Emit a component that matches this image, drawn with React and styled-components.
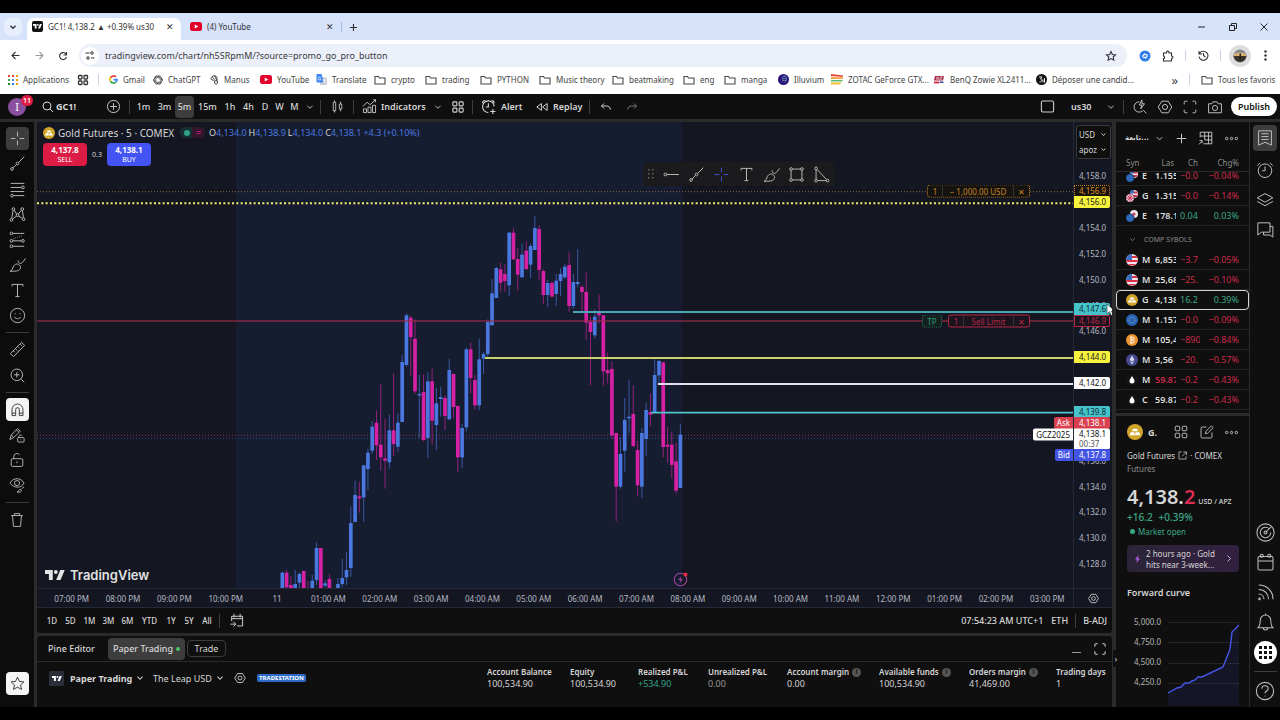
import { useState } from 'react';
import styled, { createGlobalStyle, css } from 'styled-components';

const ICONS = {
  cross: <path d='M14 4v7M14 17v7M4 14h7M17 14h7' />,
  trend: (
    <>
      <circle cx='6' cy='22' r='2' />
      <circle cx='14' cy='14' r='2' />
      <path d='M7.5 20.5l5-5M15.5 12.5L24 4' />
    </>
  ),
  fib: (
    <>
      <path d='M4 5h20M4 11h16M4 17h20M8 23h16' />
      <circle cx='22' cy='11' r='2' />
      <circle cx='6' cy='23' r='2' />
    </>
  ),
  pattern: (
    <>
      <circle cx='5' cy='22' r='2' />
      <circle cx='8' cy='6' r='2' />
      <circle cx='14' cy='15' r='2' />
      <circle cx='21' cy='6' r='2' />
      <circle cx='23' cy='21' r='2' />
      <path d='M5.4 20L7.6 8M9.2 7.6l3.6 5.8M15.2 13.4l4.6-5.8M21.3 8l1.5 11M6.6 20.8l5.8-4.6M15.6 16.2l5.8 3.6' />
    </>
  ),
  forecast: (
    <>
      <circle cx='5' cy='5' r='2' />
      <circle cx='5' cy='16' r='2' />
      <circle cx='22' cy='16' r='2' />
      <circle cx='5' cy='24' r='2' />
      <path d='M7 5h17M7 16h13M7 24h17' />
      <path d='M8 13l14-5' strokeDasharray='1 2' />
    </>
  ),
  brush: (
    <>
      <path d='M3 24c4-1 3-4 5-7 2-4 6-5 9-2s1 7-2 8-7 1-12 1z' />
      <path d='M15 8c0 5 4 6 7 2l4-5' />
    </>
  ),
  text: <path d='M6 8V5h16v3M14 5v18M11 23h6' />,
  smile: (
    <>
      <circle cx='14' cy='14' r='10.5' />
      <path d='M9.500 16c1 3.500 8 3.500 9 0M10.500 10.500v1.500M17.500 10.500v1.500' />
    </>
  ),
  ruler: (
    <>
      <path d='M3.500 20L20 3.500l4.500 4.500L8 24.500z' />
      <path d='M8 16l2 2M11 13l3 3M14.500 9.500l2 2M18 6l3 3' />
    </>
  ),
  zoom: (
    <>
      <circle cx='13' cy='13' r='8.500' />
      <path d='M19.500 19.500L24 24M13 9v8M9 13h8' />
    </>
  ),
  magnet: (
    <>
      <path d='M5 24V14a9 9 0 0 1 18 0v10h-6V14a3 3 0 0 0-6 0v10z' />
      <path d='M5 20h6M17 20h6' />
    </>
  ),
  drawLock: (
    <>
      <path d='M3 21l2-7L15 4l4 4L9 18zM5 14l4 4M13 6l4 4' />
      <rect x='15' y='18' width='10' height='7' rx='1' />
      <path d='M17 18v-2a3 3 0 0 1 5-1M20 21v1' />
    </>
  ),
  lock: (
    <>
      <rect x='5' y='12' width='18' height='12' rx='2' />
      <path d='M9 12V8a5 5 0 0 1 9-2M14 16v3' />
    </>
  ),
  eye: (
    <>
      <path d='M3 11c5-9 17-9 22 0-4 8-15 9-22 0z' />
      <circle cx='14' cy='11' r='4' />
      <path d='M14 25c3 0 2-4 5-4s2 4-1 4zM21 20l4-3' />
    </>
  ),
  trash: <path d='M5 7h18M10 7V4h8v3M7 7l1.500 17h11L21 7' />,
  star: <path d='M14 3.500l3.200 7 7.300.8-5.500 5 1.600 7.500-6.600-3.900-6.600 3.900L9 16.300l-5.500-5 7.300-.8z' />,
  ray: (
    <>
      <circle cx='5' cy='14' r='2' />
      <path d='M7 14h18' />
    </>
  ),
  rect: (
    <>
      <path d='M8 6h12M8 22h12M6 8v12M22 8v12' />
      <circle cx='6' cy='6' r='2' />
      <circle cx='22' cy='6' r='2' />
      <circle cx='6' cy='22' r='2' />
      <circle cx='22' cy='22' r='2' />
    </>
  ),
  triangle: (
    <>
      <circle cx='6' cy='5' r='2' />
      <circle cx='6' cy='23' r='2' />
      <circle cx='23' cy='23' r='2' />
      <path d='M6 7v14M8 23h13M7.500 6.500l14 15' />
    </>
  ),
  search: (
    <>
      <circle cx='12' cy='12' r='8' />
      <path d='M18 18l6 6' />
    </>
  ),
  plusCircle: (
    <>
      <circle cx='14' cy='14' r='9' />
      <path d='M14 9v10M9 14h10' />
    </>
  ),
  chevron: <path d='M8 11l6 6 6-6' />,
  candles: <path d='M7 7h4v14H7zM9 4v3M9 21v3M17 10h4v8h-4zM19 6v4M19 18v4' />,
  indicators: <path d='M4 24v-6h5v6zM11.500 24v-9h5v9zM19 24V12h5v12zM3 14l7-7 5 4 9-8M20 3h4v4' />,
  grid: (
    <>
      <rect x='5' y='5' width='7' height='7' rx='1.500' />
      <rect x='16' y='5' width='7' height='7' rx='1.500' />
      <rect x='5' y='16' width='7' height='7' rx='1.500' />
      <rect x='16' y='16' width='7' height='7' rx='1.500' />
    </>
  ),
  alert: <path d='M22 13a9 9 0 1 0-9 9.500M13 8v6H9M4 8c0-3 1-4 4-4M18 4c3 0 4 1 4 4M20 17v8M16 21h8' />,
  clock: (
    <>
      <circle cx='14' cy='15' r='9.500' />
      <path d='M14 9v6h-4M3 8l4-4M25 8l-4-4' />
    </>
  ),
  replay: <path d='M13 8v12l-8-6zM23 8v12l-8-6z' />,
  undo: <path d='M10 7l-5 5 5 5M5 12h10c4 0 7 2 8 7' />,
  redo: <path d='M18 7l5 5-5 5M23 12H13c-4 0-7 2-8 7' />,
  square: <rect x='5' y='6' width='18' height='16' rx='2' />,
  quick: <path d='M18 20a8 8 0 1 1-5-14M19 19l5 5M17 3l-4 8h4l-2 6 6-8h-4z' />,
  gear: (
    <>
      <path d='M9 5h10l5.500 9L19 23H9l-5.500-9z' />
      <circle cx='14' cy='14' r='4' />
    </>
  ),
  full: <path d='M10 5H7a2 2 0 0 0-2 2v3M18 5h3a2 2 0 0 1 2 2v3M5 18v3a2 2 0 0 0 2 2h3M23 18v3a2 2 0 0 1-2 2h-3' />,
  camera: (
    <>
      <path d='M4 9h5l2-3h6l2 3h5v14H4z' />
      <circle cx='14' cy='15.500' r='4' />
    </>
  ),
  plus: <path d='M14 5v18M5 14h18' />,
  addTable: <path d='M12 5h11v18H10M5 5v8M5 5h7M12 5v12M5 11h18M12 17h11M18 5v18M3 24l5-5M4 18h4v4' />,
  dots: (
    <>
      <circle cx='6' cy='14' r='2' />
      <circle cx='14' cy='14' r='2' />
      <circle cx='22' cy='14' r='2' />
    </>
  ),
  list: <path d='M5 4h18v20l-9-4-9 4zM9 8h10M9 12h10M9 16h10' />,
  layers: <path d='M3 11l11-6 11 6-11 6zM3 16l11 6 11-6' />,
  chat: <path d='M4 4h17v13H9l-5 4zM21 9h4v15l-4-3h-9v-4' />,
  target: (
    <>
      <circle cx='14' cy='14' r='11.500' />
      <path d='M19 9a7 7 0 1 0 2 5M14 14l8-8' />
      <circle cx='14' cy='14' r='2' />
    </>
  ),
  calendar: (
    <>
      <rect x='4' y='6' width='20' height='18' rx='2' />
      <path d='M4 12h20' />
      <circle cx='9' cy='5' r='2' />
      <circle cx='19' cy='5' r='2' />
    </>
  ),
  feed: <path d='M5 22.500a1 1 0 1 1 2 0 1 1 0 1 1-2 0M5 16c4 0 7 3 7 7M5 10c8 0 13 6 13 13M5 4c11 0 19 8 19 19' />,
  bell: <path d='M4 21c3-3 3-6 3-10a7 7 0 0 1 14 0c0 4 0 7 3 10zM11 21c0 4 6 4 6 0M14 4V2' />,
  help: (
    <>
      <circle cx='14' cy='14' r='11' />
      <path d='M10 11c0-5 8-5 8 0 0 3-4 3-4 6M14 20v1' />
    </>
  ),
  edit: <path d='M14 5H7a2 2 0 0 0-2 2v14a2 2 0 0 0 2 2h14a2 2 0 0 0 2-2v-7M12 16l1-4 9-9 3 3-9 9z' />,
  external: <path d='M12 5H5v18h18v-7M16 5h8v8M24 5L13 16' />,
  goto: <path d='M6 15V7h18v16H15M6 11h18M10 3v6M20 3v6M4 20h8M9 16l4 4-4 4' />,
};

function Icon({ name, size = 19, stroke = 1.4 }) {
  return (
    <svg width={size} height={size} viewBox='0 0 28 28' fill='none' stroke='currentColor' strokeWidth={stroke} aria-hidden='true'>
      {ICONS[name]}
    </svg>
  );
}

function TvMark({ width = 20 }) {
  return (
    <svg width={width} height={width / 2} viewBox='0 0 36 18' fill='currentColor' aria-hidden='true'>
      <path d='M0 0h14v18H7V7H0zM28 18h-8L27.500 0h8z' />
      <circle cx='19.500' cy='3.500' r='3.500' />
    </svg>
  );
}

function GoldIcon({ size = 12 }) {
  return (
    <svg width={size} height={size} viewBox='0 0 24 24' aria-hidden='true'>
      <circle cx='12' cy='12' r='12' fill='#d1a52c' />
      <path d='M9 7h6l1.500 4h-9zM5.500 12.500h5.500l1 4.500H4zM13 12.500h5.500l1.500 4.500h-8z' fill='#fff' />
    </svg>
  );
}

function Folder() {
  return (
    <svg width='12' height='10' viewBox='0 0 24 20' fill='none' stroke='#474747' strokeWidth='2.200' aria-hidden='true'>
      <path d='M2 3h7l2 3h11v12H2z' />
    </svg>
  );
}

function YoutubeIcon() {
  return (
    <svg width='12' height='9' viewBox='0 0 24 18' aria-hidden='true'>
      <rect width='24' height='18' rx='5' fill='#e3002b' />
      <path d='M9.500 5v8l7-4z' fill='#fff' />
    </svg>
  );
}

const favicons = {
  folder: <Folder />,
  youtube: <YoutubeIcon />,
  apps: (
    <svg width='10' height='10' viewBox='0 0 10 10'>
      {['#e94235', '#e94235', '#f29900', '#34a853', '#4285f4', '#f29900', '#188038', '#1a73e8', '#f29900'].map((c, i) => (
        <rect key={i} x={(i % 3) * 4} y={Math.floor(i / 3) * 4} width='2' height='2' fill={c} />
      ))}
    </svg>
  ),
  google: (
    <svg width='9' height='9' viewBox='0 0 18 18' fill='none' strokeWidth='3.500'>
      <path d='M3 5.500a7 7 0 0 1 11-1.500' stroke='#ea4335' />
      <path d='M3 12.500a7 7 0 0 1 0-7' stroke='#fbbc05' />
      <path d='M14 14a7 7 0 0 1-11-1.500' stroke='#34a853' />
      <path d='M9 9h7a7 7 0 0 1-2 5' stroke='#4285f4' />
    </svg>
  ),
  gpt: (
    <svg width='10' height='10' viewBox='0 0 20 20' fill='none' stroke='#333' strokeWidth='1.600'>
      {[0, 60, 120, 180, 240, 300].map((a) => (
        <path key={a} d='M10 2.500c3-2 6.500 0 6.500 3.500v5l-4 2.500' transform={`rotate(${a} 10 10)`} />
      ))}
    </svg>
  ),
  manus: (
    <svg width='9' height='10' viewBox='0 0 18 20' fill='none' stroke='#333' strokeWidth='1.800'>
      <path d='M3 10C0 6 4 2 6 5l3 4M5 4c1-4 5-3 6 0l2 6M8 3c3-3 6 0 6 4v6M4 10c3-1 5 1 6 4M9 14c-1 4 5 6 6 2s-2-6-5-4' />
    </svg>
  ),
  translate: (
    <svg width='11' height='11' viewBox='0 0 22 22'>
      <rect x='8' y='7' width='14' height='15' rx='2' fill='#c8ccd4' />
      <path d='M1 0h10l5 17H3a2 2 0 0 1-2-2z' fill='#4285f4' />
      <path d='M10 7.500a3 3 0 1 0 0 3H7.500M13 12h7M17 11c0 4-2 6-4 7M15 13c1 3 3 4 5 5' stroke='#fff' strokeWidth='1.300' fill='none' />
    </svg>
  ),
  illuvium: (
    <svg width='11' height='11' viewBox='0 0 22 22'>
      <circle cx='11' cy='11' r='11' fill='#2b127d' />
      <ellipse cx='13' cy='10' rx='5' ry='7' fill='#5a6ea8' />
      <path d='M10 7h6M10 11h6M10 15h5' stroke='#1d0b5c' strokeWidth='1.500' />
    </svg>
  ),
  zotac: (
    <svg width='12' height='11' viewBox='0 0 24 22'>
      <path d='M0 0l24 3v3L0 4z' fill='#e94235' />
      <path d='M0 6l24 1v3L0 10z' fill='#f2a33a' />
      <path d='M0 12h24l-2 3H0z' fill='#5fb97a' />
      <path d='M0 17h21l-3 4H0z' fill='#f2c230' />
    </svg>
  ),
  benq: (
    <svg width='11' height='9' viewBox='0 0 22 18'>
      <path d='M2 2h18l-2 9H0z' fill='#a52a43' />
      <path d='M5 5h4M12 4h5M4 8h12' stroke='#fff' strokeWidth='1.500' />
      <path d='M0 13h10v4H0z' fill='#e0304f' />
      <path d='M11 13h8v3h-8z' fill='#3b4da0' />
    </svg>
  ),
  depo: (
    <svg width='11' height='11' viewBox='0 0 22 22'>
      <circle cx='11' cy='11' r='11' fill='#111' />
      <path d='M6 6h6l-3 4c4 0 4 6-2 6M14 11v6M17 8v9' stroke='#fff' strokeWidth='1.800' fill='none' />
    </svg>
  ),
};

const bookmarks = [
  ['google', 'Gmail', 44],
  ['gpt', 'ChatGPT', 57],
  ['manus', 'Manus', 50],
  ['youtube', 'YouTube', 56],
  ['translate', 'Translate', 58],
  ['folder', 'crypto', 51],
  ['folder', 'trading', 55],
  ['folder', 'PYTHON', 59],
  ['folder', 'Music theory', 73],
  ['folder', 'beatmaking', 71],
  ['folder', 'eng', 41],
  ['folder', 'manga', 54],
  ['illuvium', 'Illuvium', 53],
  ['zotac', 'ZOTAC GeForce GTX...', 103],
  ['benq', 'BenQ Zowie XL2411...', 102],
  ['depo', 'Déposer une candid...', 100],
];

// price scale: value at the top edge of the plot and the span it covers
const TOP_PRICE = 4162.2;
const PRICE_SPAN = 36.04;
const priceTop = (price) => `${((TOP_PRICE - price) / PRICE_SPAN) * 100}%`;

const ticks = [4158, 4154, 4152, 4150, 4148, 4146, 4136, 4134, 4132, 4130, 4128];

const priceTags = [
  { text: '4,156.9', at: 4156.9, tone: 'orange' },
  { text: '4,156.0', at: 4156, tone: 'yellow' },
  { text: '4,146.9', at: 4146.8, tone: 'red' },
  { text: '4,147.6', at: 4147.7, tone: 'teal' },
  { text: '4,144.0', at: 4144, tone: 'yellow' },
  { text: '4,142.0', at: 4142, tone: 'white' },
  { text: '4,139.8', at: 4139.8, tone: 'teal' },
  { text: '4,138.1', at: 4138.9, tone: 'ask', label: 'Ask' },
  { text: '4,138.1', at: 4137.7, tone: 'white', label: 'GCZ2025', timer: '00:37' },
  { text: '4,137.8', at: 4136.45, tone: 'bid', label: 'Bid' },
];

// [up, high, body top, body bottom, low]
const candles = [
  [1, 1115, 1118, 1166, 1166], [0, 1110, 1118, 1162, 1166], [0, 1128, 1155, 1165, 1166], [1, 1110, 1152, 1166, 1166],
  [1, 1118, 1122, 1148, 1165], [0, 1112, 1113, 1166, 1166], [0, 1143, 1164, 1166, 1166], [1, 1125, 1142, 1166, 1166],
  [1, 1027, 1044, 1140, 1155], [0, 1044, 1044, 1166, 1166], [1, 1140, 1150, 1157, 1162], [0, 1122, 1137, 1166, 1166],
  [0, 1166, 1166, 1166, 1166], [1, 1134, 1152, 1166, 1166], [1, 1076, 1134, 1152, 1160], [1, 1056, 1110, 1132, 1155],
  [1, 920, 969, 1104, 1130], [1, 842, 885, 966, 966], [0, 845, 889, 895, 938], [1, 795, 796, 892, 965],
  [1, 746, 758, 807, 870], [1, 663, 680, 752, 762], [0, 632, 668, 736, 780], [0, 552, 734, 772, 812],
  [0, 657, 775, 782, 866], [1, 645, 691, 787, 806], [0, 520, 691, 732, 768], [1, 640, 668, 740, 755],
  [1, 465, 486, 666, 666], [1, 340, 346, 495, 500], [0, 348, 353, 411, 528], [0, 358, 416, 574, 582],
  [1, 525, 582, 586, 714], [0, 523, 576, 720, 724], [1, 517, 544, 714, 774], [0, 506, 544, 662, 735],
  [1, 563, 610, 675, 750], [1, 560, 591, 597, 650], [0, 585, 594, 648, 690], [1, 477, 510, 658, 660],
  [0, 520, 522, 621, 655], [0, 616, 618, 772, 816], [1, 672, 684, 772, 804], [1, 443, 448, 682, 694],
  [0, 428, 448, 534, 580], [0, 525, 540, 616, 628], [1, 416, 478, 616, 630], [1, 455, 462, 476, 522],
  [1, 358, 366, 462, 475], [1, 237, 280, 376, 376], [1, 200, 204, 294, 294], [0, 188, 208, 248, 275],
  [0, 193, 222, 243, 275], [1, 96, 98, 256, 288], [0, 85, 98, 178, 180], [0, 145, 177, 224, 272],
  [1, 130, 164, 232, 232], [0, 125, 152, 207, 210], [1, 130, 138, 194, 234], [1, 48, 84, 150, 150],
  [0, 76, 87, 210, 240], [0, 208, 213, 285, 312], [1, 240, 249, 285, 322], [0, 243, 249, 290, 292],
  [1, 222, 242, 282, 318], [1, 205, 222, 243, 288], [1, 192, 200, 232, 238], [0, 155, 195, 318, 335],
  [1, 222, 246, 318, 326], [1, 148, 246, 252, 262], [0, 255, 261, 276, 335], [0, 218, 276, 368, 420],
  [0, 350, 366, 396, 556], [1, 328, 350, 406, 416], [0, 283, 338, 346, 370], [0, 345, 346, 514, 558],
  [0, 458, 510, 520, 550], [0, 484, 507, 706, 716], [0, 698, 699, 860, 964], [1, 712, 762, 860, 866],
  [1, 594, 660, 752, 815], [1, 540, 650, 655, 700], [0, 556, 642, 738, 742], [0, 722, 750, 856, 890],
  [1, 684, 699, 860, 894], [1, 608, 630, 717, 768], [0, 580, 636, 644, 680], [1, 478, 525, 636, 638],
  [1, 480, 483, 526, 550], [0, 485, 487, 741, 772], [0, 680, 734, 740, 788], [0, 695, 734, 795, 836],
  [0, 728, 784, 872, 882], [1, 672, 704, 864, 864],
];

const hours = [
  '07:00 PM', '08:00 PM', '09:00 PM', '10:00 PM', '11', '01:00 AM', '02:00 AM', '03:00 AM', '04:00 AM', '05:00 AM',
  '06:00 AM', '07:00 AM', '08:00 AM', '09:00 AM', '10:00 AM', '11:00 AM', '12:00 PM', '01:00 PM', '02:00 PM', '03:00 PM',
];

const intervals = [['1m', 21], ['3m', 21], ['5m', 19], ['15m', 27], ['1h', 18], ['4h', 19], ['D', 14], ['W', 15], ['M', 15]];
const ranges = [['1D', 18], ['5D', 19], ['1M', 19], ['3M', 19], ['6M', 19], ['YTD', 25], ['1Y', 18], ['5Y', 18], ['All', 18]];

const pairs = [
  ['eurusd', 'E', '1.155', '−0.0', '−0.04%', 0],
  ['gbpusd', 'G', '1.315', '−0.0', '−0.14%', 0],
  ['eurjpy', 'E', '178.1', '0.04', '0.03%', 1],
];

const symbols = [
  ['us', 'M', '6,853', '−3.7', '−0.05%', 0],
  ['us', 'M', '25,68', '−25.', '−0.10%', 0],
  ['gold', 'G', '4,138', '16.2', '0.39%', 1, 'selected'],
  ['eu', 'M', '1.157', '−0.0', '−0.09%', 0],
  ['btc', 'M', '105,4', '−890', '−0.84%', 0],
  ['eth', 'M', '3,56', '−20.', '−0.57%', 0],
  ['oil', 'M', '59.87', '−0.2', '−0.43%', 0, 'falling'],
  ['oil', 'C', '59.87', '−0.2', '−0.43%', 0, 'ticking'],
];

const metrics = [
  ['Account Balance', '100,534.90', 83],
  ['Equity', '100,534.90', 68],
  ['Realized P&L', '+534.90', 70],
  ['Unrealized P&L', '0.00', 79],
  ['Account margin', '0.00', 92, true],
  ['Available funds', '100,534.90', 90, true],
  ['Orders margin', '41,469.00', 87, true],
  ['Trading days', '1', 56],
];

function SymbolIcon({ kind }) {
  if (kind === 'gold') return <GoldIcon />;
  const flags = {
    us: (
      <>
        <circle cx='12' cy='12' r='12' fill='#f0e8ec' />
        <path d='M12 4h9l2 4H12zM12 12h12l-1 4H1l-1-4zM3 20h18l-5 3H8z' fill='#d8324b' />
        <path d='M12 0v12H0A12 12 0 0 1 12 0z' fill='#3a6fc4' />
      </>
    ),
    eu: (
      <>
        <circle cx='12' cy='12' r='12' fill='#2763b5' />
        <circle cx='12' cy='12' r='6' fill='none' stroke='#e8d9a0' strokeWidth='1.500' strokeDasharray='1.500 2.500' />
      </>
    ),
    btc: (
      <>
        <circle cx='12' cy='12' r='12' fill='#ee9431' />
        <path d='M8 6h5c4 0 4 5 0 5.500 5 .5 4 6.500 0 6.500H8M10 6v12M10 11.500h3' stroke='#fff' strokeWidth='2' fill='none' />
      </>
    ),
    eth: (
      <>
        <circle cx='12' cy='12' r='12' fill='#454a8f' />
        <path d='M12 3l5 9-5 3-5-3zM7 14l5 3 5-3-5 7z' fill='#d5d8f0' />
      </>
    ),
    oil: (
      <>
        <circle cx='12' cy='12' r='12' fill='#141414' />
        <path d='M12 4c3 5 5 7 5 10a5 5 0 0 1-10 0c0-3 2-5 5-10z' fill='#fff' />
      </>
    ),
  };
  if (flags[kind]) {
    return (
      <svg width='12' height='12' viewBox='0 0 24 24' aria-hidden='true'>
        {flags[kind]}
      </svg>
    );
  }
  return (
    <svg width='12' height='12' viewBox='0 0 24 24' aria-hidden='true'>
      <circle cx='16' cy='8' r='8' fill='#f0e8ec' />
      {kind === 'eurjpy' ? <circle cx='16' cy='8' r='3' fill='#d8324b' /> : <path d='M16 3h6l2 4h-8zM12 10h12l-3 4h-9z' fill='#d8324b' />}
      {kind === 'gbpusd' || kind === 'eurusd' ? <path d='M8 7a8 8 0 0 1 8-7v7z' fill='#3a6fc4' /> : null}
      <circle cx='8' cy='16' r='8.500' fill={kind === 'gbpusd' ? '#e9c9d6' : '#2763b5'} stroke='#0f0f0f' />
      {kind === 'gbpusd' ? <path d='M8 8v16M0 16h16M3 11l10 10M13 11L3 21' stroke='#c9375a' strokeWidth='1.800' /> : <circle cx='8' cy='16' r='4' fill='none' stroke='#a9bfe0' strokeDasharray='1 2' />}
    </svg>
  );
}

function SymbolRow({ row }) {
  const [icon, name, last, change, percent, up, state] = row;
  return (
    <Row $selected={state === 'selected'}>
      <Cell>
        <SymbolIcon kind={icon} />
      </Cell>
      <Cell $bold>{name}</Cell>
      <Cell $bold $tone={state === 'falling' ? 'down' : undefined}>{last}</Cell>
      <Cell $tone={up ? 'up' : 'down'}>{change}</Cell>
      <Cell $right $tone={up ? 'up' : 'down'}>{percent}</Cell>
    </Row>
  );
}

function Browser() {
  return (
    <header>
      <TabStrip>
        <TabSearch aria-label='Search tabs'>
          <Icon name='chevron' size={12} stroke={3} />
        </TabSearch>
        <Tab $active>
          <TabLogo>
            <TvMark width={9} />
          </TabLogo>
          <TabTitle>GC1! 4,138.2 ▲ +0.39% us30</TabTitle>
          <Glyph aria-label='Close tab'>✕</Glyph>
        </Tab>
        <Tab>
          <YoutubeIcon />
          <TabTitle>(4) YouTube</TabTitle>
          <Glyph aria-label='Close tab'>✕</Glyph>
        </Tab>
        <NewTab aria-label='New tab'>
          <Icon name='plus' size={11} stroke={3} />
        </NewTab>
        <WindowButtons>
          <Glyph aria-label='Minimize'>
            <svg width='8' height='8' viewBox='0 0 8 8'><path d='M0 4h7' stroke='#222' /></svg>
          </Glyph>
          <Glyph aria-label='Restore'>
            <svg width='8' height='8' viewBox='0 0 8 8' fill='none' stroke='#222'><path d='M.5 2.500h5v5h-5zM2.500 2V.5h5v5H6' /></svg>
          </Glyph>
          <Glyph aria-label='Close'>
            <svg width='8' height='8' viewBox='0 0 8 8'><path d='M.5.5l7 7M7.500.5l-7 7' stroke='#222' /></svg>
          </Glyph>
        </WindowButtons>
      </TabStrip>
      <AddressRow>
        <Glyph aria-label='Back'>
          <svg width='9' height='9' viewBox='0 0 18 18' fill='none' stroke='#333' strokeWidth='2.200'><path d='M17 9H2M9 2L2 9l7 7' /></svg>
        </Glyph>
        <Glyph aria-label='Forward'>
          <svg width='9' height='9' viewBox='0 0 18 18' fill='none' stroke='#999' strokeWidth='2.200'><path d='M1 9h15M9 2l7 7-7 7' /></svg>
        </Glyph>
        <Glyph aria-label='Reload'>
          <svg width='10' height='10' viewBox='0 0 20 20' fill='none' stroke='#333' strokeWidth='2.200'><path d='M17 12a7 7 0 1 1-2-7l2 2M17 2v6h-6' /></svg>
        </Glyph>
        <AddressBar>
          <SiteInfo aria-label='Site information'>
            <svg width='10' height='9' viewBox='0 0 20 18' fill='none' stroke='#333' strokeWidth='2'><path d='M1 4h8M12 14h7' /><circle cx='14' cy='4' r='2.500' /><circle cx='6' cy='14' r='2.500' /></svg>
          </SiteInfo>
          <AddressInput aria-label='Address' defaultValue='tradingview.com/chart/nh5SRpmM/?source=promo_go_pro_button' />
          <Glyph aria-label='Bookmark'>
            <Icon name='star' size={12} stroke={2.5} />
          </Glyph>
        </AddressBar>
        <Extensions>
          <Glyph aria-label='Shazam'>
            <svg width='12' height='12' viewBox='0 0 24 24'><circle cx='12' cy='12' r='11' fill='#2f7de8' /><path d='M12 7l-4 4c-2 3 2 5 4 3M12 17l4-4c2-3-2-5-4-3' stroke='#fff' strokeWidth='2.200' fill='none' /></svg>
          </Glyph>
          <Glyph aria-label='Extensions'>
            <svg width='12' height='12' viewBox='0 0 24 24' fill='none' stroke='#333' strokeWidth='2.200'><path d='M3 6h6c-1-5 6-5 5 0h5v6c4 0 4 5 0 5v5H3v-5c3 0 3-5 0-5z' /></svg>
          </Glyph>
          <ChromeLine />
          <Glyph aria-label='History'>
            <svg width='11' height='11' viewBox='0 0 22 22' fill='none' stroke='#333' strokeWidth='2.200'><path d='M3 7a9 9 0 1 1-1 6M2 2v6h6M11 6v5l4 3' /></svg>
          </Glyph>
          <ChromeLine />
          <ProfileButton aria-label='Profile'>
            <svg width='14' height='14' viewBox='0 0 28 28'><circle cx='14' cy='14' r='13' fill='#7e8990' /><path d='M1 13h26a13 13 0 0 1-26 0z' fill='#3a3328' /><path d='M2 10c7-4 17-4 24 0v4H2z' fill='#d9b172' /><path d='M13 9h3v12h-3z' fill='#222' /></svg>
          </ProfileButton>
          <Glyph aria-label='Menu'>
            <svg width='3' height='11' viewBox='0 0 3 11' fill='#333'><circle cx='1.500' cy='1.500' r='1.200' /><circle cx='1.500' cy='5.500' r='1.200' /><circle cx='1.500' cy='9.500' r='1.200' /></svg>
          </Glyph>
        </Extensions>
      </AddressRow>
      <Bookmarks>
        <Bookmark href='#' $width={68}>
          {favicons.apps} Applications
        </Bookmark>
        <Glyph aria-label='Tab groups'>
          <Icon name='grid' size={14} stroke={2.6} />
        </Glyph>
        <ChromeLine />
        {bookmarks.map(([icon, label, width]) => (
          <Bookmark key={label} href='#' $width={width}>
            {favicons[icon]} {label}
          </Bookmark>
        ))}
        <AllBookmarks>
          <span>»</span>
          <ChromeLine />
          <Bookmark href='#' $width={70}>
            <Folder /> Tous les favoris
          </Bookmark>
        </AllBookmarks>
      </Bookmarks>
    </header>
  );
}

function TopBar({ interval, setInterval }) {
  return (
    <TopBarBox>
      <Avatar aria-label='Account'>
        I<Notice>11</Notice>
      </Avatar>
      <SymbolSearch>
        <Icon name='search' size={14} stroke={2} /> GC1!
      </SymbolSearch>
      <IconButton aria-label='Compare' $width={25}>
        <Icon name='plusCircle' />
      </IconButton>
      <Divider />
      {intervals.map(([label, width]) => (
        <Interval key={label} $width={width} $active={label === interval} onClick={() => setInterval(label)}>
          {label}
        </Interval>
      ))}
      <IconButton aria-label='More intervals' $width={15}>
        <Icon name='chevron' size={12} stroke={2} />
      </IconButton>
      <Divider />
      <IconButton aria-label='Candles' $width={26}>
        <Icon name='candles' size={17} />
      </IconButton>
      <Divider />
      <TextButton $width={72}>
        <Icon name='indicators' size={17} /> Indicators
      </TextButton>
      <IconButton aria-label='Favorite indicators' $width={17}>
        <Icon name='chevron' size={12} stroke={2} />
      </IconButton>
      <IconButton aria-label='Templates' $width={23}>
        <Icon name='grid' size={16} stroke={2} />
      </IconButton>
      <Divider />
      <TextButton $width={54}>
        <Icon name='alert' size={18} stroke={1.7} /> Alert
      </TextButton>
      <TextButton $width={56}>
        <Icon name='replay' size={16} stroke={1.7} /> Replay
      </TextButton>
      <Divider />
      <IconButton aria-label='Undo' $width={26}>
        <Icon name='undo' size={14} stroke={2} />
      </IconButton>
      <IconButton aria-label='Redo' $width={26} $dim>
        <Icon name='redo' size={14} stroke={2} />
      </IconButton>
      <TopRight>
        <IconButton aria-label='Layout' $width={24}>
          <Icon name='square' stroke={1.6} />
        </IconButton>
        <LayoutSelect aria-label='Chart layout' defaultValue='us30'>
          <option>us30</option>
        </LayoutSelect>
        <Chevron>
          <Icon name='chevron' size={12} stroke={2} />
        </Chevron>
        <Divider />
        <IconButton aria-label='Quick search' $width={25}>
          <Icon name='quick' size={18} />
        </IconButton>
        <IconButton aria-label='Settings' $width={25}>
          <Icon name='gear' size={18} />
        </IconButton>
        <IconButton aria-label='Fullscreen' $width={25}>
          <Icon name='full' size={18} />
        </IconButton>
        <IconButton aria-label='Snapshot' $width={25}>
          <Icon name='camera' size={18} />
        </IconButton>
        <Publish>Publish</Publish>
      </TopRight>
    </TopBarBox>
  );
}

function DrawingTools() {
  const [magnet, setMagnet] = useState(true);
  return (
    <Tools>
      <ToolGroup $rows={8}>
        {['cross', 'trend', 'fib', 'pattern', 'forecast', 'brush', 'text', 'smile'].map((name, i) => (
          <Tool key={name} aria-label={name} $active={i === 0}>
            <Icon name={name} />
          </Tool>
        ))}
      </ToolGroup>
      <ToolLine />
      <ToolGroup $rows={2}>
        {['ruler', 'zoom'].map((name) => (
          <Tool key={name} aria-label={name}>
            <Icon name={name} />
          </Tool>
        ))}
      </ToolGroup>
      <ToolLine />
      <ToolGroup $rows={4}>
        <Tool aria-label='magnet' $light={magnet} onClick={() => setMagnet(!magnet)}>
          <Icon name='magnet' size={17} />
        </Tool>
        {['drawLock', 'lock', 'eye'].map((name) => (
          <Tool key={name} aria-label={name}>
            <Icon name={name} size={18} />
          </Tool>
        ))}
      </ToolGroup>
      <ToolLine />
      <ToolGroup $rows={1}>
        <Tool aria-label='trash'>
          <Icon name='trash' size={18} />
        </Tool>
      </ToolGroup>
      <FavoriteTool aria-label='favorites' $light>
        <Icon name='star' size={17} />
      </FavoriteTool>
    </Tools>
  );
}

function Plot() {
  return (
    <PlotBox>
      <PlotSvg viewBox='0 0 3108 1398' preserveAspectRatio='none' role='img' aria-label='Gold Futures price chart'>
        <rect x='597' width='1338' height='1398' fill='#161d31' />
        <path d='M0 209H3108' stroke='#8a6a3a' strokeWidth='3' strokeDasharray='3 6' />
        <path d='M0 244H3108' stroke='#f4ee6e' strokeWidth='6' strokeDasharray='6 7' />
        <path d='M0 940H3108' stroke='#8b2f55' strokeWidth='3' strokeDasharray='3 6' />
        <path d='M0 949H3108' stroke='#3d478f' strokeWidth='3' strokeDasharray='3 6' />
        {candles.map(([up, high, top, bottom, low], i) => {
          const x = 736 + i * 12.84;
          const color = up ? '#4a78e0' : '#d621a5';
          return (
            <g key={i} fill={color} transform='translate(0 234)'>
              <rect x={x - 1.5} y={high} width='3' height={Math.max(low - high, 0)} opacity='.65' />
              <rect x={x - 5.5} y={top} width='11' height={Math.max(bottom - top, 0)} />
            </g>
          );
        })}
        <path d='M0 597H3108' stroke='#9c2c49' strokeWidth='5' opacity='.8' />
        <path d='M1608 570H3108' stroke='#4aa5b5' strokeWidth='6' />
        <path d='M1344 708H3108' stroke='#cdd06a' strokeWidth='6' />
        <path d='M1863 786H3108' stroke='#e4dff0' strokeWidth='6' />
        <path d='M1842 872H3108' stroke='#4ec8cc' strokeWidth='5' />
      </PlotSvg>

      <Legend>
        <GoldIcon />
        <LegendTitle>Gold Futures · 5 · COMEX</LegendTitle>
        <Status>
          <i />
          <b>=</b>
        </Status>
        <Ohlc>
          <span>O<em>4,134.0</em></span>
          <span>H<em>4,138.9</em></span>
          <span>L<em>4,134.0</em></span>
          <span>C<em>4,138.1</em></span>
          <em>+4.3 (+0.10%)</em>
        </Ohlc>
      </Legend>
      <Trade>
        <TradeButton $color='#dc1c44'>
          <strong>4,137.8</strong>SELL
        </TradeButton>
        <span>0.3</span>
        <TradeButton $color='#4353f4'>
          <strong>4,138.1</strong>BUY
        </TradeButton>
      </Trade>

      <FloatingTools>
        <svg width='6' height='10' viewBox='0 0 6 10' fill='#666'>
          {[0, 4, 8].map((y) => (
            <path key={y} d={`M0 ${y}h1.500v1.500H0zM4 ${y}h1.500v1.500H4z`} />
          ))}
        </svg>
        {['ray', 'trend', 'cross', 'text', 'brush', 'rect', 'triangle'].map((name) => (
          <FloatingTool key={name} aria-label={`Draw ${name}`} $active={name === 'cross'}>
            <Icon name={name} />
          </FloatingTool>
        ))}
      </FloatingTools>

      <Order style={{ top: priceTop(4156.9) }} $color='#c98222' $width={103} $dotted>
        <OrderCell>1</OrderCell>
        <OrderCell $wide>− 1,000.00 USD</OrderCell>
        <OrderClose aria-label='Cancel order'>✕</OrderClose>
      </Order>
      <TakeProfit style={{ top: priceTop(4146.8) }}>TP</TakeProfit>
      <Order style={{ top: priceTop(4146.8) }} $color='#b62846' $width={82}>
        <OrderCell>1</OrderCell>
        <OrderCell $wide>Sell Limit</OrderCell>
        <OrderClose aria-label='Cancel limit'>✕</OrderClose>
      </Order>

      <Brand>
        <TvMark width={20} /> TradingView
      </Brand>
      <NewsMark>
        <svg width='15' height='15' viewBox='0 0 30 30' fill='none'>
          <circle cx='15' cy='15' r='12.500' stroke='#a0449c' strokeWidth='2.200' />
          <path d='M17 8l-7 8h5l-2 7 7-9h-5z' fill='#a0449c' />
          <circle cx='25' cy='5' r='4' fill='#e52b44' />
        </svg>
      </NewsMark>
    </PlotBox>
  );
}

function PriceAxis() {
  return (
    <Axis>
      {ticks.map((tick) => (
        <Tick key={tick} style={{ top: priceTop(tick) }}>
          {tick.toLocaleString('en-US', { minimumFractionDigits: 1 })}
        </Tick>
      ))}
      {priceTags.map((tag) => (
        <PriceTag key={tag.tone + tag.at} style={{ top: priceTop(tag.at) }} $tone={tag.tone}>
          {tag.label && <TagLabel $tone={tag.tone}>{tag.label}</TagLabel>}
          {tag.text}
          {tag.timer && <small>{tag.timer}</small>}
        </PriceTag>
      ))}
      <Units>
        <UnitRow>
          <select aria-label='Currency'><option>USD</option></select>
          <Icon name='chevron' size={9} stroke={3} />
        </UnitRow>
        <UnitRow>
          <select aria-label='Unit'><option>apoz</option></select>
          <Icon name='chevron' size={9} stroke={3} />
        </UnitRow>
      </Units>
      <Cursor width='10' height='14' viewBox='0 0 10 14'>
        <path d='M1 1v10l2.500-2.500L5 12.500l2-1L5.500 8H9z' fill='#fff' stroke='#222' strokeWidth='.6' />
      </Cursor>
    </Axis>
  );
}

function AccountPanel() {
  return (
    <Account>
      <AccountTabs>
        <AccountTab $width={71}>Pine Editor</AccountTab>
        <AccountTab $width={77} $active>
          Paper Trading<Dot />
        </AccountTab>
        <TradeTab>Trade</TradeTab>
        <PanelButtons>
          <IconButton aria-label='Minimize panel' $width={24}>
            <svg width='9' height='9' viewBox='0 0 9 9'><path d='M0 8.500h9' stroke='#9a9a9a' /></svg>
          </IconButton>
          <IconButton aria-label='Maximize panel' $width={24}>
            <Icon name='full' size={16} stroke={1.8} />
          </IconButton>
        </PanelButtons>
      </AccountTabs>
      <AccountBody>
        <BrokerLogo>
          <TvMark width={10} />
        </BrokerLogo>
        <BrokerButton $bold $width={83}>
          Paper Trading <Icon name='chevron' size={12} stroke={2.4} />
        </BrokerButton>
        <BrokerButton $width={87}>
          The Leap USD <Icon name='chevron' size={12} stroke={2.4} />
        </BrokerButton>
        <IconButton aria-label='Account settings' $width={12}>
          <Icon name='gear' size={14} stroke={1.8} />
        </IconButton>
        <Sponsor>TRADESTATION</Sponsor>
        <Metrics>
          {metrics.map(([label, value, width, info]) => (
            <Metric key={label} $width={width} $positive={value.startsWith('+')} $muted={label === 'Unrealized P&L'}>
              <dt>
                {label}
                {info && <Info>i</Info>}
              </dt>
              <dd>{value}</dd>
            </Metric>
          ))}
        </Metrics>
      </AccountBody>
    </Account>
  );
}

function Watchlist() {
  return (
    <Watch>
      <WatchHead>
        <ListName>تابعة...</ListName>
        <IconButton aria-label='Change list' $width={20}>
          <Icon name='chevron' size={13} stroke={1.8} />
        </IconButton>
        <IconButton aria-label='Add symbol' $width={24}>
          <Icon name='plus' size={15} stroke={1.8} />
        </IconButton>
        <IconButton aria-label='Advanced view' $width={26}>
          <Icon name='addTable' size={18} />
        </IconButton>
        <IconButton aria-label='List options' $width={24}>
          <Icon name='dots' size={17} />
        </IconButton>
      </WatchHead>
      <SymbolTable>
        <thead>
          <HeadRow>
            <th>Syn</th>
            <th>Las</th>
            <th>Ch</th>
            <th>Chg%</th>
          </HeadRow>
        </thead>
        <tbody>
          {pairs.map((row) => (
            <SymbolRow key={row[0]} row={row} />
          ))}
          <SectionRow>
            <td>
              <Icon name='chevron' size={11} stroke={2} /> COMP SYBOLS
            </td>
          </SectionRow>
          {symbols.map((row, i) => (
            <SymbolRow key={i} row={row} />
          ))}
        </tbody>
      </SymbolTable>
    </Watch>
  );
}

function Details() {
  return (
    <DetailBox>
      <DetailHead>
        <GoldIcon size={16} />
        <strong>G.</strong>
        <IconButton aria-label='Expand' $width={25}>
          <Icon name='grid' size={18} />
        </IconButton>
        <IconButton aria-label='Note' $width={26}>
          <Icon name='edit' size={17} />
        </IconButton>
        <IconButton aria-label='Details options' $width={24}>
          <Icon name='dots' size={17} />
        </IconButton>
      </DetailHead>
      <Exchange>
        Gold Futures <Icon name='external' size={11} stroke={1.8} /> · COMEX
      </Exchange>
      <Kind>Futures</Kind>
      <Price>
        <span>4,138.<b>2</b></span>
        <small>USD / APZ</small>
      </Price>
      <Change>
        <span>+16.2</span>
        <span>+0.39%</span>
      </Change>
      <Market>Market open</Market>
      <News href='#'>
        <svg width='5' height='8' viewBox='0 0 10 16' fill='#a65bdc'><path d='M7 0L0 9h4l-1 7 7-9H6z' /></svg>
        <span>
          2 hours ago · Gold
          <br />
          hits near 3-week...
        </span>
        <svg width='4' height='7' viewBox='0 0 4 7' fill='none' stroke='#c9b3dd'><path d='M.5.5l3 3-3 3' /></svg>
      </News>
      <CurveTitle>Forward curve</CurveTitle>
      <Curve>
        <CurveScale>
          <span>5,000.0</span>
          <span>4,750.0</span>
          <span>4,500.0</span>
          <span>4,250.0</span>
        </CurveScale>
        <svg width='71' height='94' viewBox='0 0 71 94' fill='none'>
          <path d='M0 10.500h71M0 30.500h71M0 51.500h71M0 71.500h71' stroke='#252525' />
          <path d='M0 81l9-5 5-1 4-4 4-1 3-2 3-1 2-3h4l21-10 7-18 2-16 7-7v81H0z' fill='#4353f4' opacity='.1' />
          <path d='M0 81l9-5 4-1 4-4h4l3-2 3-1 3-3h4l21-10 7-18 2-17 7-7' stroke='#4556e8' strokeWidth='1.400' />
        </svg>
      </Curve>
    </DetailBox>
  );
}

function Rail() {
  return (
    <RailBox>
      <RailButton aria-label='Watchlist' $active>
        <Icon name='list' size={20} />
      </RailButton>
      {['clock', 'layers', 'chat'].map((name) => (
        <RailButton key={name} aria-label={name}>
          <Icon name={name} size={20} />
        </RailButton>
      ))}
      <RailBottom>
        {['target', 'calendar', 'feed', 'bell'].map((name) => (
          <RailButton key={name} aria-label={name}>
            <Icon name={name} size={21} />
          </RailButton>
        ))}
        <Products aria-label='Products'>
          <svg width='13' height='13' viewBox='0 0 13 13' fill='#111'>
            {[0, 5, 10].map((y) => (
              <path key={y} d={`M0 ${y}h3v3H0zM5 ${y}h3v3H5zM10 ${y}h3v3h-3z`} />
            ))}
          </svg>
        </Products>
        <ToolLine />
        <RailButton aria-label='help'>
          <Icon name='help' size={22} />
        </RailButton>
      </RailBottom>
    </RailBox>
  );
}

function App() {
  const [interval, setInterval] = useState('5m');

  return (
    <Page>
      <GlobalStyle />
      <Browser />
      <TopBar interval={interval} setInterval={setInterval} />
      <Workspace>
        <DrawingTools />
        <Center>
          <Chart>
            <PlotRow>
              <Plot />
              <PriceAxis />
            </PlotRow>
            <TimeRow>
              <Hours>
                {hours.map((hour) => (
                  <span key={hour}>{hour}</span>
                ))}
              </Hours>
              <AxisSettings aria-label='Axis settings'>
                <Icon name='gear' size={13} stroke={1.8} />
              </AxisSettings>
            </TimeRow>
            <RangeRow>
              {ranges.map(([label, width]) => (
                <Range key={label} $width={width}>{label}</Range>
              ))}
              <Divider />
              <IconButton aria-label='Go to date' $width={26}>
                <Icon name='goto' size={17} stroke={1.6} />
              </IconButton>
              <RangeRight>
                <Range>07:54:23 AM UTC+1</Range>
                <Range>ETH</Range>
                <Divider />
                <Range>B-ADJ</Range>
              </RangeRight>
            </RangeRow>
          </Chart>
          <AccountPanel />
        </Center>
        <Side>
          <Collapse aria-label='Collapse sidebar'>›</Collapse>
          <Watchlist />
          <Details />
        </Side>
        <Rail />
      </Workspace>
    </Page>
  );
}

export default App;

const GlobalStyle = createGlobalStyle`
  * {
    box-sizing: border-box;
  }
  body {
    margin: 0;
    background: #000;
    font-family: 'Noto Sans', 'Open Sans', sans-serif;
    font-size: 9px;
    color: #d6d6d6;
  }
  button, input, select {
    font: inherit;
    color: inherit;
    border: none;
    background: none;
    padding: 0;
    margin: 0;
  }
  button {
    cursor: pointer;
  }
  select {
    appearance: none;
  }
  a {
    color: inherit;
    text-decoration: none;
  }
  svg {
    display: block;
    flex: none;
  }
`;

const center = css`
  display: flex;
  align-items: center;
  justify-content: center;
`;

const Page = styled.div`
  display: flex;
  flex-direction: column;
  min-height: 100vh;
  padding: 13px 0;
`;

const TabStrip = styled.div`
  display: flex;
  align-items: flex-end;
  height: 27px;
  padding: 0 10px 0 4px;
  background: #d7e3fa;
  color: #333;
`;

const TabSearch = styled.button`
  ${center}
  width: 18px;
  height: 18px;
  margin: 0 5px 4px 0;
  border-radius: 6px;
  background: #e8effc;
`;

const Tab = styled.div`
  display: flex;
  align-items: center;
  gap: 5px;
  width: ${(props) => (props.$active ? '154px' : '160px')};
  height: 22px;
  padding: 0 5px 5px ${(props) => (props.$active ? '5px' : '9px')};
  border-radius: 7px 7px 0 0;
  background: ${(props) => (props.$active ? '#fff' : 'transparent')};
`;

const TabLogo = styled.span`
  ${center}
  width: 11px;
  height: 11px;
  border-radius: 2px;
  background: #111;
  color: #fff;
`;

const TabTitle = styled.span`
  flex: 1;
  font-size: 8px;
  white-space: nowrap;
`;

const Glyph = styled.button`
  ${center}
  min-width: 12px;
  font-size: 9px;
  color: #333;
`;

const NewTab = styled(Glyph)`
  height: 10px;
  margin-bottom: 8px;
  padding-left: 6px;
  border-left: 1px solid #a9bfe8;
`;

const WindowButtons = styled.div`
  display: flex;
  gap: 19px;
  margin: 0 0 9px auto;
`;

const AddressRow = styled.div`
  display: flex;
  align-items: center;
  gap: 12px;
  height: 27px;
  padding: 4px 9px 0;
  background: #fff;
`;

const AddressBar = styled.div`
  display: flex;
  align-items: center;
  flex: 1;
  gap: 6px;
  height: 23px;
  margin-left: -2px;
  padding: 0 10px 0 2px;
  border-radius: 12px;
  background: #ecf0fb;
`;

const SiteInfo = styled.button`
  ${center}
  width: 18px;
  height: 18px;
  border-radius: 50%;
  background: #fff;
`;

const AddressInput = styled.input`
  flex: 1;
  font-size: 9px;
  color: #3a3a3a;
  outline: none;
`;

const Extensions = styled.div`
  display: flex;
  align-items: center;
  gap: 11px;
`;

const ChromeLine = styled.i`
  width: 1px;
  height: 11px;
  background: #c9d3e6;
`;

const ProfileButton = styled.button`
  ${center}
  width: 22px;
  height: 22px;
  margin: 0 -3px;
  border-radius: 50%;
  background: #dedede;
`;

const Bookmarks = styled.nav`
  display: flex;
  align-items: center;
  height: 27px;
  padding: 0 9px 2px 8px;
  background: #fff;
  color: #444;

  > ${Glyph} {
    margin-right: 8px;
  }
  > ${ChromeLine} {
    margin-right: 10px;
  }
`;

const Bookmark = styled.a`
  display: flex;
  align-items: center;
  gap: 5px;
  width: ${(props) => props.$width}px;
  font-size: 8px;
  white-space: nowrap;
`;

const AllBookmarks = styled.div`
  display: flex;
  align-items: center;
  gap: 11px;
  margin-left: auto;
  font-size: 13px;
`;

const TopBarBox = styled.div`
  display: flex;
  align-items: center;
  height: 28px;
  padding: 0 3px 0 8px;
  border-bottom: 3px solid #2b2b2b;
  background: #0f0f0f;
`;

const Avatar = styled.button`
  ${center}
  position: relative;
  width: 18px;
  height: 18px;
  margin-right: 15px;
  border-radius: 50%;
  background: #8a4f9e;
  color: #fff;
  font-size: 11px;
`;

const Notice = styled.span`
  ${center}
  position: absolute;
  top: -3px;
  left: 13px;
  width: 12px;
  height: 11px;
  border-radius: 6px;
  background: #dc1c44;
  font-size: 7px;
  font-weight: 600;
`;

const SymbolSearch = styled.button`
  display: flex;
  align-items: center;
  gap: 1px;
  width: 60px;
  font-weight: 700;
`;

const IconButton = styled.button`
  ${center}
  width: ${(props) => props.$width}px;
  flex: none;
  height: 24px;
  color: ${(props) => (props.$dim ? '#777' : '#cfcfcf')};
`;

const Divider = styled.i`
  flex: none;
  width: 1px;
  height: 14px;
  margin: 0 3px;
  background: #3d3d3d;
`;

const Interval = styled.button`
  flex: none;
  width: ${(props) => props.$width}px;
  height: 22px;
  border-radius: 4px;
  background: ${(props) => (props.$active ? '#3d3d3d' : 'transparent')};
  font-weight: 500;
`;

const TextButton = styled.button`
  display: flex;
  align-items: center;
  gap: 3px;
  width: ${(props) => props.$width}px;
  padding-left: 4px;
  font-weight: 600;
`;

const TopRight = styled.div`
  display: flex;
  align-items: center;
  margin-left: auto;
`;

const LayoutSelect = styled.select`
  width: 34px;
  margin-left: 12px;
  font-weight: 600;
`;

const Chevron = styled.span`
  ${center}
  width: 12px;
  margin-right: 3px;
  pointer-events: none;
`;

const Publish = styled.button`
  width: 46px;
  height: 19px;
  margin-left: 4px;
  border-radius: 10px;
  background: #fff;
  color: #111;
  font-weight: 600;
`;

const Workspace = styled.main`
  display: flex;
  flex: 1;
  background: #2b2b2b;
`;

const Tools = styled.aside`
  display: flex;
  flex-direction: column;
  align-items: center;
  width: 34px;
  margin-right: 3px;
  padding: 4px 0 12px;
  background: #0c0c0c;
`;

const ToolGroup = styled.div`
  display: grid;
  grid-template-rows: repeat(${(props) => props.$rows}, 1fr);
  height: ${(props) => Math.round(props.$rows * 25.25)}px;
  align-items: center;
`;

const Tool = styled.button`
  ${center}
  width: 23px;
  height: 23px;
  border-radius: 4px;
  background: ${(props) => (props.$light ? '#f4f4f4' : props.$active ? '#3d3d3d' : 'transparent')};
  color: ${(props) => (props.$light ? '#222' : '#bdbdbd')};
`;

const FavoriteTool = styled(Tool)`
  margin-top: auto;
`;

const ToolLine = styled.i`
  width: 23px;
  height: 1px;
  margin: 4px 0;
  background: #3d3d3d;
`;

const Center = styled.div`
  display: flex;
  flex-direction: column;
  flex: 1;
  min-width: 0;
  gap: 3px;
`;

const Chart = styled.section`
  display: flex;
  flex-direction: column;
  flex: 1;
  background: #141722;
  border-radius: 0 0 3px 3px;
  overflow: hidden;
`;

const PlotRow = styled.div`
  display: flex;
  flex: 1;
`;

const PlotBox = styled.div`
  position: relative;
  flex: 1;
`;

const PlotSvg = styled.svg`
  position: absolute;
  inset: 0;
  width: 100%;
  height: 100%;
`;

const Legend = styled.div`
  position: absolute;
  top: 3px;
  left: 6px;
  display: flex;
  align-items: center;
  height: 15px;
`;

const LegendTitle = styled.span`
  width: 125px;
  padding-left: 3px;
  font-size: 10px;
  white-space: nowrap;
`;

const Status = styled.span`
  ${center}
  gap: 6px;
  width: 25px;
  height: 11px;
  margin-right: 4px;
  border-radius: 6px;
  background: linear-gradient(90deg, #17302f 50%, #33152c 50%);

  i {
    width: 6px;
    height: 6px;
    border-radius: 50%;
    background: #2fa287;
  }
  b {
    color: #a81e6d;
    line-height: 9px;
  }
`;

const Ohlc = styled.span`
  display: flex;
  gap: 2px;
  font-size: 9px;
  white-space: nowrap;

  em {
    font-style: normal;
    color: #4a78e0;
  }
`;

const Trade = styled.div`
  position: absolute;
  top: 21px;
  left: 6px;
  display: flex;
  align-items: center;

  > span {
    width: 20px;
    text-align: center;
    font-size: 7px;
  }
`;

const TradeButton = styled.button`
  display: flex;
  flex-direction: column;
  align-items: center;
  justify-content: center;
  width: 44px;
  height: 23px;
  border-radius: 4px;
  background: ${(props) => props.$color};
  color: #fff;
  font-size: 7px;
  line-height: 9px;

  strong {
    font-size: 8px;
    line-height: 10px;
  }
`;

const FloatingTools = styled.div`
  position: absolute;
  top: 40px;
  left: 606px;
  display: flex;
  align-items: center;
  width: 192px;
  height: 24px;
  padding-left: 5px;
  border-radius: 4px;
  background: #1b1b1d;
`;

const FloatingTool = styled.button`
  ${center}
  width: 25px;
  height: 24px;
  color: ${(props) => (props.$active ? '#4353d4' : '#bdbdbd')};

  svg + & {
    margin-left: 5px;
  }
`;

const Order = styled.div`
  position: absolute;
  right: 43px;
  display: flex;
  width: ${(props) => props.$width}px;
  height: 13px;
  transform: translateY(-50%);
  border: 1px ${(props) => (props.$dotted ? 'dotted' : 'solid')} ${(props) => props.$color};
  border-radius: 3px;
  background: ${(props) => (props.$dotted ? '#15130f' : '#1b141f')};
  color: ${(props) => props.$color};
  font-size: 8px;
  line-height: 11px;
`;

const OrderCell = styled.span`
  flex: ${(props) => (props.$wide ? '1' : '0 0 15px')};
  border-right: 1px solid #333;
  text-align: center;
  white-space: nowrap;
`;

const OrderClose = styled.button`
  width: 15px;
  font-size: 8px;
`;

const TakeProfit = styled.span`
  position: absolute;
  right: 131px;
  width: 20px;
  height: 13px;
  transform: translateY(-50%);
  border: 1px dotted #2b7a60;
  border-radius: 3px;
  background: #14201f;
  color: #32a07c;
  font-size: 8px;
  line-height: 11px;
  text-align: center;
`;

const Brand = styled.div`
  position: absolute;
  left: 8px;
  bottom: 5px;
  display: flex;
  align-items: center;
  gap: 5px;
  font-family: Inter, Roboto, sans-serif;
  font-size: 13px;
  font-weight: 600;
  color: #e3e3e3;
`;

const NewsMark = styled.span`
  position: absolute;
  left: 636px;
  bottom: 1px;
`;

const Axis = styled.div`
  position: relative;
  width: 39px;
  border-left: 1px solid #262a36;
`;

const Tick = styled.span`
  position: absolute;
  left: 5px;
  transform: translateY(-50%);
  color: #b4b8c2;
  font-size: 8px;
  line-height: 10px;
`;

const tones = {
  orange: ['#17120c', '#d98d28', '1px dotted #c98222'],
  red: ['#1b141f', '#b62846', '1px solid #b62846'],
  yellow: ['#f7f23c', '#222', 'none'],
  teal: ['#45c3cb', '#0e2a33', 'none'],
  white: ['#fff', '#111', 'none'],
  ask: ['#d9404f', '#fff', 'none'],
  bid: ['#4353e4', '#fff', 'none'],
};

const PriceTag = styled.span`
  position: absolute;
  left: 0;
  display: flex;
  flex-direction: column;
  justify-content: center;
  width: 36px;
  height: 12px;
  padding-left: ${(props) => (tones[props.$tone][2] === 'none' ? '5px' : '4px')};
  transform: translateY(-50%);
  border: ${(props) => tones[props.$tone][2]};
  border-radius: 0 2px 2px 0;
  background: ${(props) => tones[props.$tone][0]};
  color: ${(props) => tones[props.$tone][1]};
  font-size: 8px;
  line-height: 10px;

  &:has(small) {
    height: 21px;
  }
  small {
    font-size: 8px;
    color: #555;
  }
`;

const TagLabel = styled.span`
  position: absolute;
  right: 100%;
  top: 0;
  margin-right: 1px;
  padding: 0 3px;
  border-radius: 2px 0 0 2px;
  background: ${(props) => tones[props.$tone][0]};
  line-height: 12px;
`;

const Units = styled.div`
  position: absolute;
  top: 3px;
  left: 2px;
  width: 35px;
  padding: 1px 2px;
  border: 1px solid #3a3a3a;
  border-radius: 3px;
  background: #0f0f0f;
`;

const UnitRow = styled.label`
  display: flex;
  align-items: center;
  justify-content: space-between;
  height: 15px;
  font-size: 8px;

  select {
    width: 20px;
  }
`;

const Cursor = styled.svg`
  position: absolute;
  top: 181px;
  left: 32px;
`;

const TimeRow = styled.div`
  display: flex;
  height: 20px;
  border-top: 1px solid #262a36;
  border-bottom: 1px solid #262a36;
`;

const Hours = styled.div`
  display: grid;
  grid-template-columns: repeat(20, 1fr);
  align-items: center;
  flex: 1;
  padding-left: 9px;
  color: #b4b8c2;
  font-size: 8px;
  text-align: center;
  white-space: nowrap;
`;

const AxisSettings = styled.button`
  ${center}
  width: 39px;
  border-left: 1px solid #262a36;
`;

const RangeRow = styled.div`
  display: flex;
  align-items: center;
  height: 25px;
  padding: 0 5px 0 6px;
  background: #0f0f0f;
`;

const Range = styled.button`
  width: ${(props) => (props.$width ? `${props.$width}px` : 'auto')};
  font-size: ${(props) => (props.$width ? '8px' : '9px')};
  font-weight: 500;
  white-space: nowrap;
`;

const RangeRight = styled.div`
  display: flex;
  align-items: center;
  gap: 4px;
  margin-left: auto;

  ${Range}:first-child {
    margin-right: 4px;
  }
`;

const Account = styled.section`
  height: 71px;
  border-radius: 3px 3px 0 0;
  background: #0f0f0f;
`;

const AccountTabs = styled.div`
  display: flex;
  align-items: center;
  height: 26px;
  border-bottom: 1px solid #2b2b2b;
`;

const AccountTab = styled.button`
  ${center}
  gap: 3px;
  width: ${(props) => props.$width}px;
  height: 22px;
  padding-right: ${(props) => (props.$active ? 0 : '2px')};
  border-radius: 4px;
  background: ${(props) => (props.$active ? '#3d3d3d' : 'transparent')};
  font-weight: 500;
  white-space: nowrap;
`;

const Dot = styled.i`
  width: 4px;
  height: 4px;
  border-radius: 50%;
  background: #4fc36b;
`;

const TradeTab = styled.button`
  width: 39px;
  height: 17px;
  margin-left: 2px;
  border: 1px solid #3d3d3d;
  border-radius: 4px;
`;

const PanelButtons = styled.div`
  display: flex;
  margin-left: auto;
`;

const AccountBody = styled.div`
  display: flex;
  align-items: center;
  height: 32px;
  padding-left: 12px;
`;

const BrokerLogo = styled.span`
  ${center}
  width: 15px;
  height: 15px;
  border-radius: 1px;
  background: #2a2e39;
  color: #fff;
`;

const BrokerButton = styled.button`
  display: flex;
  align-items: center;
  gap: 2px;
  width: ${(props) => props.$width}px;
  padding-left: 6px;
  font-weight: ${(props) => (props.$bold ? 700 : 400)};
  white-space: nowrap;
`;

const Sponsor = styled.span`
  width: 49px;
  height: 8px;
  margin-left: 11px;
  border-radius: 2px;
  background: #2c6bc9;
  color: #fff;
  font-size: 6px;
  font-weight: 700;
  line-height: 8px;
  text-align: center;
`;

const Metrics = styled.dl`
  display: flex;
  margin: 0 0 0 auto;
`;

const Metric = styled.div`
  width: ${(props) => props.$width}px;
  font-size: 8px;
  line-height: 12px;
  white-space: nowrap;

  dt {
    display: flex;
    align-items: center;
    gap: 3px;
    font-weight: 600;
  }
  dd {
    margin: 0;
    font-size: 9px;
    color: ${(props) => (props.$positive ? '#2fa287' : props.$muted ? '#999' : '#d6d6d6')};
  }
`;

const Info = styled.i`
  ${center}
  width: 9px;
  height: 9px;
  border-radius: 50%;
  background: #555;
  color: #111;
  font-size: 7px;
  font-style: normal;
`;

const Side = styled.aside`
  position: relative;
  display: flex;
  flex-direction: column;
  gap: 3px;
  width: 133px;
  margin: 0 1px 0 4px;
`;

const Collapse = styled.button`
  position: absolute;
  left: -3px;
  bottom: 40px;
  width: 6px;
  height: 17px;
  border-radius: 0 3px 3px 0;
  background: #0f0f0f;
  z-index: 2;
  line-height: 14px;
`;

const Watch = styled.section`
  height: 291px;
  background: #0f0f0f;
  overflow: hidden;
`;

const WatchHead = styled.div`
  display: flex;
  align-items: center;
  justify-content: flex-end;
  height: 32px;
  padding-right: 6px;
`;

const ListName = styled.span`
  font-family: 'DejaVu Sans', sans-serif;
  font-size: 7px;
  font-weight: 700;
`;

const SymbolTable = styled.table`
  display: flex;
  flex-direction: column;

  thead {
    position: relative;
    display: block;
    z-index: 1;
    background: #0f0f0f;
  }
  tbody {
    display: block;
    margin-top: -6px;
  }
`;

const HeadRow = styled.tr`
  display: grid;
  grid-template-columns: 24px 24px 24px 1fr;
  align-items: center;
  height: 18px;
  padding: 0 10px;
  border-bottom: 1px solid #2b2b2b;
  color: #8c8c8c;

  th {
    padding: 0;
    font-size: 8px;
    font-weight: 400;
    text-align: right;
  }
  th:first-child {
    text-align: left;
  }
`;

const Row = styled.tr`
  display: grid;
  grid-template-columns: 12px 9px 21px 20px 1fr;
  column-gap: 4px;
  align-items: center;
  height: 20px;
  padding: 0 10px;
  border-bottom: 1px solid #242424;
  ${(props) =>
    props.$selected &&
    css`
      outline: 1px solid #d6d6d6;
      outline-offset: -1px;
      border-radius: 4px;
    `}
`;

const Cell = styled.td`
  padding: 0;
  overflow: hidden;
  font-size: 9px;
  font-weight: ${(props) => (props.$bold ? 600 : 400)};
  text-align: ${(props) => (props.$right ? 'right' : 'left')};
  white-space: nowrap;
  color: ${(props) => (props.$tone === 'up' ? '#3aa888' : props.$tone === 'down' ? '#cc2a4b' : '#dedede')};
`;

const SectionRow = styled.tr`
  display: flex;
  height: 24px;
  padding: 6px 0 0 11px;
  color: #8c8c8c;
  font-size: 7px;

  td {
    display: flex;
    align-items: center;
    gap: 6px;
    height: 15px;
    padding: 0;
  }
`;

const DetailBox = styled.section`
  flex: 1;
  padding: 4px 10px 0 11px;
  background: #0f0f0f;
`;

const DetailHead = styled.div`
  display: flex;
  align-items: center;
  height: 24px;
  margin-right: -4px;

  strong {
    flex: 1;
    padding-left: 5px;
  }
`;

const Exchange = styled.div`
  display: flex;
  align-items: center;
  gap: 2px;
  height: 14px;
  margin-top: 4px;
  font-size: 8px;
  white-space: nowrap;
`;

const Kind = styled.div`
  color: #8c8c8c;
  font-size: 8px;
  line-height: 14px;
`;

const Price = styled.div`
  display: flex;
  align-items: baseline;
  gap: 3px;
  height: 26px;
  margin-top: 8px;
  font-size: 20px;
  font-weight: 600;
  line-height: 26px;
  white-space: nowrap;

  b {
    color: #dc2c50;
    font-weight: 600;
  }
  small {
    font-size: 7px;
    font-weight: 500;
    line-height: 10px;
  }
`;

const Change = styled.div`
  display: flex;
  gap: 6px;
  color: #3aa888;
  font-size: 10px;
  font-weight: 500;
  line-height: 14px;
`;

const Market = styled.div`
  display: flex;
  align-items: center;
  gap: 3px;
  padding-left: 3px;
  color: #3aa888;
  font-size: 8px;
  line-height: 15px;

  &::before {
    content: '';
    width: 5px;
    height: 5px;
    border-radius: 50%;
    background: #3aa888;
  }
`;

const News = styled.a`
  display: flex;
  align-items: center;
  gap: 6px;
  height: 27px;
  margin-top: 6px;
  padding: 0 8px;
  border-radius: 4px;
  background: linear-gradient(90deg, #2b2438, #32203f);
  font-size: 8px;
  line-height: 11px;
  white-space: nowrap;

  span {
    flex: 1;
  }
`;

const CurveTitle = styled.h3`
  margin: 14px 0 0;
  font-size: 9px;
  font-weight: 600;
  line-height: 14px;
`;

const Curve = styled.div`
  display: flex;
  justify-content: space-between;
  padding-top: 12px;
  height: 106px;
`;

const CurveScale = styled.div`
  display: flex;
  flex-direction: column;
  gap: 10px;
  padding: 5px 0 0 7px;
  color: #b5b5b5;
  font-size: 8px;
  line-height: 10px;
`;

const RailBox = styled.nav`
  display: flex;
  flex-direction: column;
  align-items: center;
  gap: 7px;
  width: 30px;
  padding: 3px 0 5px;
  background: #0f0f0f;
`;

const RailButton = styled.button`
  ${center}
  width: 24px;
  height: ${(props) => (props.$active ? '26px' : '23px')};
  border-radius: 4px;
  background: ${(props) => (props.$active ? '#3d3d3d' : 'transparent')};
  color: #bdbdbd;
`;

const RailBottom = styled.div`
  display: flex;
  flex-direction: column;
  align-items: center;
  gap: 7px;
  margin-top: auto;

  ${ToolLine} {
    margin: 0;
  }
`;

const Products = styled.button`
  ${center}
  width: 23px;
  height: 23px;
  border-radius: 50%;
  background: #fff;
`;
